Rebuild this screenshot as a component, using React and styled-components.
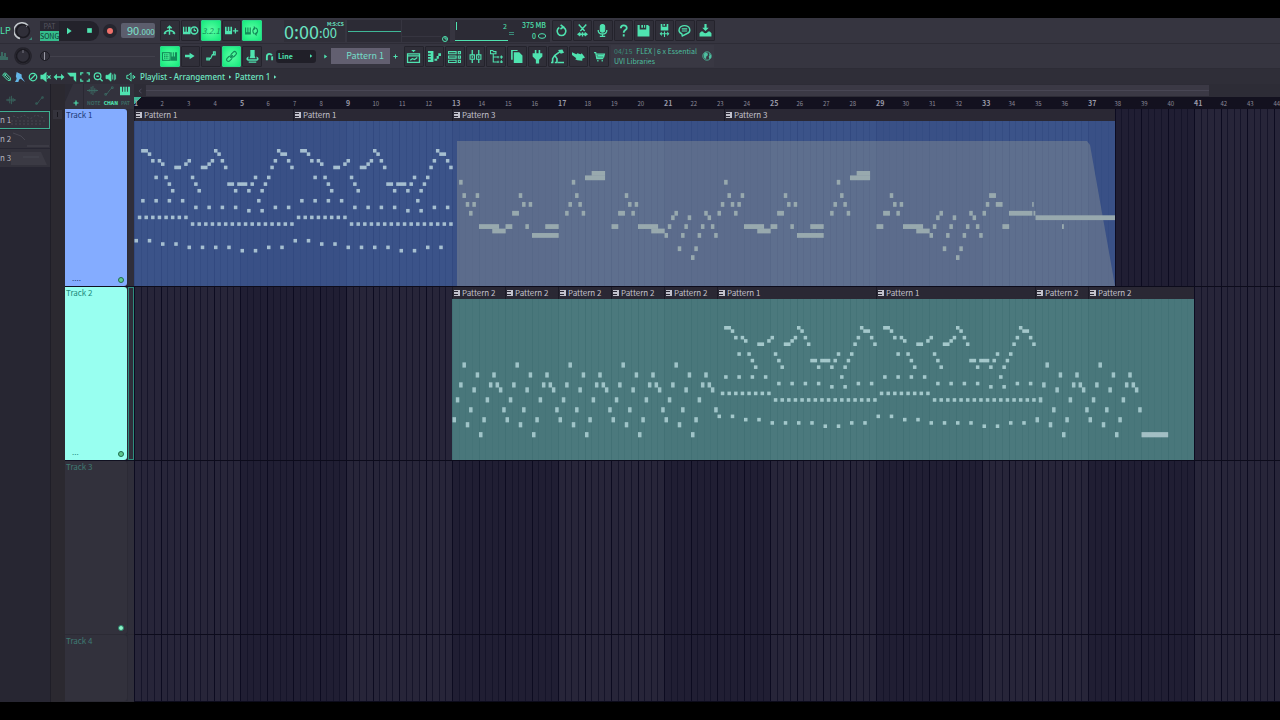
import React, { useState } from "react";
import styled, { createGlobalStyle, css } from "styled-components";

const theme = {
  accent: "#4fe3b0",
  accentDim: "#3a8a78",
  text: "#c2c2cc",
};

const BAR = 53 / 2;
const STEP = BAR / 8;

const barsToPx = (bars) => Math.round(bars * BAR);

const GlobalStyle = createGlobalStyle`
  * {
    box-sizing: border-box;
  }

  body {
    margin: 0;
    background: #000000;
    font-family: "Noto Sans CJK SC", "Noto Sans", sans-serif;
    color: ${theme.accent};
  }

  button, select, input {
    font: inherit;
    color: inherit;
  }
`;

const Screen = styled.div`
  height: 100vh;
  padding: 18px 0;
  display: flex;
  flex-direction: column;
  overflow: hidden;
`;

const Toolbar = styled.header`
  background: #363540;
  display: flex;
  flex-direction: column;
`;

const ToolRow = styled.div`
  display: flex;
  align-items: center;
  height: ${({ $height }) => $height}px;
  border-bottom: 1px solid #2d2c36;
  overflow: hidden;
`;

const Group = styled.div`
  display: flex;
  align-items: center;
  flex: none;
  width: ${({ $width }) => $width}px;
  height: 100%;
  padding: ${({ $pad }) => $pad || "0"};
  gap: ${({ $gap }) => $gap || 0}px;
`;

const ButtonStrip = styled.div`
  display: flex;
  flex: none;
  gap: 1px;
  height: 21px;
  width: ${({ $width }) => $width}px;
`;

const ToolButton = styled.button`
  flex: 1;
  min-width: 0;
  padding: 0;
  display: flex;
  align-items: center;
  justify-content: center;
  border: 1px solid ${({ $on }) => ($on ? "#2bd98a" : "#24232c")};
  border-radius: 1px;
  background: ${({ $on }) =>
    $on ? "radial-gradient(#5cffa4, #14ea7c)" : "#302f39"};
  color: ${({ $on }) => ($on ? "#128a58" : theme.accent)};
`;

const PlainButton = styled.button`
  padding: 0;
  border: 0;
  background: none;
  display: flex;
  align-items: center;
  justify-content: center;
  width: ${({ $width }) => $width || 13}px;
  height: 13px;
  color: ${({ $color }) => $color || theme.accent};
`;

const MenuEnd = styled.span`
  width: 8px;
  font-size: 9px;
  line-height: 12px;
  white-space: nowrap;
`;

const Transport = styled.div`
  display: flex;
  align-items: center;
  height: 20px;
  border-radius: 0 9px 9px 0;
  background: #23222b;
`;

const ModeSwitch = styled.div`
  display: flex;
  flex-direction: column;
  width: 19px;
`;

const ModeButton = styled.button`
  height: 10px;
  padding: 0;
  border: 0;
  font-size: 7px;
  line-height: 10px;
  background: ${({ $on }) => ($on ? "#35bd8d" : "#292832")};
  color: ${({ $on }) => ($on ? "#12352e" : "#55545f")};
`;

const Tempo = styled.output`
  width: 34px;
  height: 15px;
  border-radius: 2px;
  background: #5c5e6d;
  color: #7be0cc;
  font-size: 11px;
  line-height: 15px;
  padding-left: 6px;

  small {
    font-size: 8px;
  }
`;

const Clock = styled.div`
  display: flex;
  width: 61px;
  height: 22px;
  background: #302f39;
  color: #6ae3c2;
  font-size: 18px;
  line-height: 22px;
  white-space: nowrap;
`;

const ClockTail = styled.div`
  display: flex;
  flex-direction: column;
  font-size: 13px;
  line-height: 12px;
`;

const ClockUnit = styled.span`
  padding-left: 8px;
  font-size: 5px;
  line-height: 7px;
  font-weight: 700;
`;

const Panel = styled.div`
  display: flex;
  width: ${({ $width }) => $width}px;
  height: 22px;
  background: #2c2b35;
`;

const Stats = styled.div`
  flex: 1;
  padding-right: 4px;
  font-size: 7px;
  line-height: 11px;
  font-weight: 500;
  white-space: nowrap;
`;

const StatLine = styled.div`
  display: flex;
  align-items: center;
  justify-content: flex-end;
  gap: 2px;
  height: 11px;
`;

const SnapBox = styled.label`
  display: flex;
  align-items: center;
  width: 40px;
  height: 13px;
  padding-right: 3px;
  border-radius: 3px;
  background: #201f28;
`;

const SnapSelect = styled.select`
  appearance: none;
  flex: 1;
  min-width: 0;
  height: 13px;
  padding: 0 2px;
  border: 0;
  background: none;
  font-size: 7px;
  line-height: 13px;
  font-weight: 700;
`;

const PatternSelect = styled.select`
  appearance: none;
  width: 59px;
  height: 16px;
  padding: 0 6px 0 0;
  border: 0;
  background: #625f70;
  color: #74dcc8;
  font-size: 9px;
  line-height: 16px;
  text-align: right;
  text-align-last: right;
`;

const News = styled.div`
  display: flex;
  align-items: center;
  justify-content: space-between;
  width: 103px;
  height: 22px;
  padding: 0 2px 0 3px;
  background: #393843;
  font-size: 7px;
  line-height: 10px;
  color: #4dbf9f;
  white-space: nowrap;

  p {
    margin: 0;
  }

  span {
    color: ${theme.accentDim};
    margin-right: 4px;
  }
`;

const SliderTrack = styled.input`
  appearance: none;
  flex: 1;
  min-width: 0;
  height: 12px;
  margin: 0;
  background: linear-gradient(#42414c, #42414c) center / 100% 1px no-repeat;

  &::-webkit-slider-thumb {
    appearance: none;
    width: 10px;
    height: 10px;
    border-radius: 50%;
    border: 1px solid #1d1c24;
    background: linear-gradient(90deg, #33323c 3px, #9a9aa6 3px 4px, #33323c 4px);
  }
`;

const TitleBar = styled.div`
  display: flex;
  align-items: center;
  height: 15px;
  background: #2f2e38;
`;

const Crumbs = styled.h1`
  display: flex;
  align-items: center;
  gap: 3px;
  margin: 0;
  font-family: "Noto Sans", sans-serif;
  font-size: 8px;
  line-height: 12px;
  font-weight: 500;
  color: #6fe8c4;
  white-space: nowrap;
`;

const Workspace = styled.main`
  flex: 1;
  min-height: 0;
  display: flex;
  background: #2b2a34;
`;

const Picker = styled.aside`
  flex: none;
  width: 51px;
  display: flex;
  flex-direction: column;
  gap: 1px;
  background: #272632;
  border-right: 1px solid #1f1e27;
`;

const PickerTabs = styled.div`
  display: flex;
  align-items: center;
  justify-content: space-between;
  height: 26px;
  padding: 6px 4px 0;
  background: #2d2c37;
`;

const PickerItem = styled.button`
  display: flex;
  align-items: center;
  justify-content: space-between;
  height: 18px;
  padding: 0;
  border: 1px solid ${({ $on }) => ($on ? "#3fae90" : "transparent")};
  border-left: 0;
  background: #32313b;
  color: #b4b4bf;
  font-size: 8px;
  line-height: 12px;
  white-space: nowrap;
`;

const Gutter = styled.div`
  flex: none;
  width: 14px;
  padding-top: 26px;
  background: #2b2930;
`;

const GutterMark = styled.div`
  width: 9px;
  height: 9px;
  margin-left: 2px;
  background: linear-gradient(#17161d, #17161d) center / 1px 5px no-repeat #34333c;
`;

const Heads = styled.section`
  flex: none;
  width: 69px;
  display: flex;
  flex-direction: column;
`;

const HeadTools = styled.div`
  display: flex;
  flex: none;
  height: 25px;
  background: #33323d;
  clip-path: polygon(8px 0, 100% 0, 100% 100%, 0 100%, 0 18px);
`;

const AddTrack = styled.div`
  display: flex;
  align-items: flex-end;
  width: 19px;
  padding-left: 4px;
  border-right: 1px solid #2a2933;
`;

const HeadToolColumn = styled.div`
  flex: 1;
  display: flex;
  flex-direction: column;
`;

const HeadToolRow = styled.div`
  display: flex;
  align-items: center;
  justify-content: space-between;
  height: 13px;
  padding: 0 4px 0 3px;
  font-size: 5px;
  line-height: 12px;
  font-weight: 700;
  color: #3c6b64;

  strong {
    color: ${theme.accent};
  }
`;

const HeadRow = styled.div`
  display: flex;
  ${({ $height }) => ($height ? css`flex: none; height: ${$height}px;` : css`flex: 1; min-height: 0;`)}
  border-bottom: 1px solid ${({ $tone }) => ($tone ? "#101020" : "#2b2a34")};
  background: #2b2a35;
`;

const TrackHead = styled.div`
  display: flex;
  flex-direction: column;
  justify-content: space-between;
  width: 62px;
  padding: 0 3px 1px 1px;
  border-radius: 0 3px 3px 0;
  background: ${({ $tone }) => $tone || "#32313c"};
  color: ${({ $ink }) => $ink};
  font-size: 8px;
  line-height: 11px;
`;

const HeadFoot = styled.div`
  display: flex;
  align-items: center;
  justify-content: space-between;
  height: 12px;
  padding-left: 6px;
`;

const Dots = styled.span`
  height: 12px;
  font-size: 8px;
  line-height: 10px;
`;

const Lamp = styled.button`
  width: 6px;
  height: 6px;
  padding: 0;
  margin-top: 2px;
  border: 1px solid ${({ $on }) => ($on ? "#2b7f68" : "#206b4c")};
  border-radius: 50%;
  background: ${({ $on }) => ($on ? "#8cf5c8" : "#5cc98f")};
`;

const Meter = styled.div`
  flex: 1;
  margin-left: 1px;
  background: #2f2e3a;
  border: ${({ $active }) => ($active ? "1px solid #2f8d7c" : "0")};
`;

const Timeline = styled.section`
  flex: 1;
  min-width: 0;
  display: flex;
  flex-direction: column;
  overflow: hidden;
`;

const ScrollStrip = styled.div`
  flex: none;
  display: flex;
  align-items: center;
  height: 13px;
  padding-left: 3px;
  gap: 3px;
  background: #2d2c36;
  color: #57566a;
`;

const ScrollThumb = styled.div`
  width: 93%;
  height: 11px;
  background: linear-gradient(#484654, #484654) center / 100% 1px no-repeat #3b3945;
`;

const Ruler = styled.ol`
  flex: none;
  display: flex;
  height: 12px;
  margin: 0;
  padding: 0;
  list-style: none;
  background: #13111f;
`;

const RulerPair = styled.li`
  flex: none;
  display: flex;
  width: 53px;
`;

const RulerMark = styled.span`
  flex: 1;
  color: ${({ $strong }) => ($strong ? "#9a9aa8" : "#8a8997")};
  font-size: ${({ $strong }) => ($strong ? 7 : 6)}px;
  font-weight: ${({ $strong }) => ($strong ? 700 : 400)};
  line-height: 13px;
  background: ${({ $first }) =>
    $first ? "linear-gradient(135deg, #3fb797 5px, transparent 5px)" : "none"};
`;

const Lanes = styled.div`
  flex: 1;
  min-height: 0;
  display: flex;
  flex-direction: column;
  background:
    repeating-linear-gradient(
      90deg,
      #0c0b20 0 1px, transparent 1px 7px,
      #151429 7px 8px, transparent 8px 13px,
      #151429 13px 14px, transparent 14px 20px,
      #151429 20px 21px, transparent 21px 27px,
      #0c0b20 27px 28px, transparent 28px 33px,
      #151429 33px 34px, transparent 34px 40px,
      #151429 40px 41px, transparent 41px 46px,
      #151429 46px 47px, transparent 47px 53px
    ),
    repeating-linear-gradient(90deg, #272539 0 106px, #201e33 106px 212px);
`;

const Lane = styled.div`
  display: flex;
  ${({ $height }) => ($height ? css`flex: none; height: ${$height}px;` : css`flex: 1;`)}
  flex-direction: column;
  border-bottom: 1px solid #0c0b1b;
  padding-left: ${({ $start }) => barsToPx($start || 0)}px;
`;

const ClipTitles = styled.div`
  display: flex;
  height: 12px;
`;

const ClipTitle = styled.div`
  flex: none;
  display: flex;
  align-items: center;
  gap: 2px;
  width: ${({ $bars }) => barsToPx($bars)}px;
  padding-left: 1px;
  border-left: 1px solid #1b1a26;
  background: #2a2834;
  color: ${theme.text};
  font-size: 8px;
  line-height: 12px;
  white-space: nowrap;
`;

const ClipBody = styled.svg`
  display: block;
  flex: none;
  background: ${({ $fill }) => $fill};
`;

const Svg = styled.svg`
  display: block;
  flex: none;
  fill: none;
  stroke: currentColor;
`;

const ChartLabel = styled.text`
  font-size: 7px;
  fill: ${theme.accent};
  stroke: none;
`;

const Count = styled.span`
  font-size: 8px;
  line-height: 12px;
  font-style: italic;
`;

const shapes = {
  metronome: <path d="M1 9C3 5 9 5 11 9M6 10V2M4 4l2-2 2 2M1 9l2-1M11 9l-2-1" strokeWidth="1.3" />,
  keysClock: (
    <>
      <path d="M0 3h1v4h1V3h1v4h1V3h2v6H0z" fill="currentColor" stroke="none" />
      <circle cx="9" cy="6" r="2.8" strokeWidth="1.2" />
      <path d="M9 4.4V6h1.4" strokeWidth="1" />
    </>
  ),
  keysPlus: <path d="M0 2.500h1.500v4h1v-4h1.500v4h1v-4h1.500V9.500H0zM9 4h1.200v1.700h2v1.200h-2v1.800H9V6.900H7.200V5.700H9z" fill="currentColor" stroke="none" />,
  keysLoop: (
    <>
      <path d="M0 3h1v4h1V3h1v4h1V3h1v6H0z" fill="currentColor" stroke="none" />
      <path d="M8 8.500C6 7 6.500 4 8.500 3.500M7.500 2.200l1.200 1.300-1.200 1.300M9.500 3.500c2 1.500 1.500 4.500-.5 5M10 7.200L8.800 8.500 10 9.800" />
    </>
  ),
  keyboard: (
    <>
      <rect x="-.5" y="2.500" width="7" height="7" />
      <path d="M1 4.500h4M1 6h4M1 7.500h4" strokeDasharray="1 .5" />
      <path d="M7 2h1v4h1V2h1v4h1V2h2v8H7z" fill="currentColor" stroke="none" />
    </>
  ),
  arrow: <path d="M0 4.500h5.500V2l6 4-6 4V7.500H0z" fill="currentColor" stroke="none" />,
  slide: <path d="M1 8.500h3v2H1zM9 1h2v3.500H9zM4 9.500c4-.5 1.500-5 5-6" strokeWidth="1.500" />,
  link: (
    <g transform="rotate(-45 6 6)">
      <rect x="-.8" y="4" width="6.800" height="4" rx="2" strokeWidth="1.200" />
      <rect x="6" y="4" width="6.800" height="4" rx="2" strokeWidth="1.200" />
      <path d="M4 6h4" strokeWidth="1.200" />
    </g>
  ),
  hat: <path d="M4 0h4v5.500l.8 2H3.200l.8-2zM2.500 6C-.5 7 0 9.500 2 10h8c2-.5 2.500-3-.5-4l.5 2.500H2zM2.500 10.600h7v1.200h-7z" fill="currentColor" stroke="none" />,
  refresh: <path d="M4 3.200a4 4 0 1 0 4 0M5.200.8l2.600 2-2.800 1.800" strokeWidth="1.500" />,
  cut: <path d="M2.500 .5l5.500 6M9.500 .5L4 6.500M2 9.500h8M4 8L2 9.500 4 11M8 8l2 1.500L8 11M6 7.500v4" strokeWidth="1.300" />,
  mic: (
    <>
      <rect x="4" y=".5" width="4" height="7" rx="2" fill="currentColor" />
      <path d="M2 5.500c0 5 8 5 8 0M6 9v2M3.500 11.500h5" strokeWidth="1.200" />
    </>
  ),
  help: <path d="M3.500 4c0-3.500 5.500-3.500 5.500-.3C9 5.800 6.200 5.500 6.200 8M6.200 9.500v2" strokeWidth="1.700" />,
  save: <path d="M.5 1H2.500v4h6V1H10l1.500 1v9.500H.5zM4 1h1.500v2.500H4zM6.500 1h1v2.500h-1z" fill="currentColor" stroke="none" />,
  saveAs: <path d="M2.500 0H4v2.500h4V0h1.500v6h-7zM5 0h1.500v1.500H5zM1.500 9l2-2v1.500h2V7h1v1.500h2V7l2 2-2 2V9.500h-2V12h-1V9.500h-2V11z" fill="currentColor" stroke="none" />,
  comment: (
    <>
      <path d="M3.500 9C-1 7 1 1.500 6 1.500S13 7 8 9L4 11z" strokeWidth="1.300" />
      <path d="M3.500 4.500h5M3.500 6.500h5" />
    </>
  ),
  download: (
    <>
      <path d="M5 0h2v3.500h2L6 6.500 3 3.500h2z" fill="currentColor" stroke="none" />
      <path d="M2 7L.5 8.500v3h11v-3L10 7H8.200c-.5 2-4 2-4.400 0z" fill="currentColor" stroke="none" />
    </>
  ),
  playlist: (
    <>
      <path d="M.5 3.500h11v8H.5zM.5 5.500h11M3 9.500l2-1.500 2 .8L9.500 7" strokeWidth="1.200" />
      <path d="M4 0h4L6 2z" fill="currentColor" stroke="none" />
    </>
  ),
  pianoRoll: <path d="M0 1h5v10H0V9h2.500V8H0V6.500h2.500V5.500H0V4h2.500V3H0zM6 8h2.500v2H6zM8 5.500h2v2.500H8zM9.500 3H12v2.500H9.500z" fill="currentColor" stroke="none" />,
  rack: <path d="M.5 1.500h7v2h-7zM.5 5.500h7v2h-7zM.5 9.500h7v2h-7zM9.500 1.500h2v2h-2zM9.500 5.500h2v2h-2zM9.500 9.500h2v2h-2z" />,
  mixer: (
    <>
      <path d="M3 0v12M9 0v12" strokeWidth="1.200" />
      <path d="M1 4.500h4v4H1zM7 4.500h4v4H7zM3 5.500v2M9 5.500v2" fill="#302f39" />
    </>
  ),
  tree: <path d="M.5.500h2l1 1h2v2h-5zM3 4v7h4M3 6.500h4M7.500 5.500v2M7.500 10v2M9 6.500h3M9 11h3M10.500 5v3M10.500 9.500V12" />,
  files: <path d="M1 0h6v1H2.500v8H1zM3.500 2H8.500l3 3V12h-8z" fill="currentColor" stroke="none" />,
  plug: <path d="M3.500 0H5v3h2V0h1.500v3H10.500v3L7.500 9v3.500h-3V9L1.500 6V3h2z" fill="currentColor" stroke="none" />,
  worker: (
    <>
      <path d="M9 1L3.500 5l2 3v3.500H3.500M3.500 5L1.500 8v3.500H0M6.500 11.500H12" strokeWidth="1.500" />
      <path d="M6.500 0l4-.5 1.500 3-3 1z" fill="currentColor" stroke="none" />
    </>
  ),
  hand: <path d="M0 2l4 2 1-1 3 1 1-1 3 4-2.500 1v2L5 9.500 3 8.500l1-1-4-3z" fill="currentColor" stroke="none" />,
  cart: <path d="M1 2.500h1.500l1 5.500h6M3 3.800h7.500L9.800 6.500H3.500M4 5.200h6M4.500 9.200v1.500M8.500 9.200v1.500" strokeWidth="1.100" />,
  globe: (
    <>
      <circle cx="6" cy="6" r="5" />
      <path d="M2 4l2-2.500 3 1.500 0 2-2 2v3L2.500 8zM8 2l3 3v3L9 10 8 7l1-2z" fill="currentColor" stroke="none" />
    </>
  ),
  magnet: <path d="M2.500 11V6a3.500 3.500 0 0 1 7 0v5" strokeWidth="2.500" strokeDasharray="14 1.500" />,
  pencil: <path d="M2 2l2-1 6 6v3H7L1 4zM3 3l6 6M5 2L3 5" strokeWidth="1.200" />,
  brush: <path d="M2 0l6 3 0 3 4 6-5-4-2 1-1 3H0l2-4-1-3z" fill="#63b5e6" stroke="none" />,
  ban: (
    <>
      <circle cx="6" cy="6" r="4.500" strokeWidth="1.500" />
      <path d="M3 9l6-6" strokeWidth="1.500" />
    </>
  ),
  mute: <path d="M0 4h2.500L6 1v10L2.500 8H0zM7.500 4l4 4M11.500 4l-4 4" fill="currentColor" strokeWidth="1.300" />,
  resize: <path d="M-.5 6l4-4v3h5V2l4 4-4 4V7h-5v3z" fill="currentColor" stroke="none" />,
  slice: <path d="M0 1h11v11L8 9V5.500H4z" fill="currentColor" stroke="none" />,
  select: <path d="M1 4V1h3M8 1h3v3M11 8v3H8M4 11H1V8" strokeWidth="1.600" />,
  zoom: (
    <>
      <circle cx="5.500" cy="5" r="4" strokeWidth="1.500" />
      <path d="M8.500 8l3 3M4 5h3" strokeWidth="1.700" />
    </>
  ),
  speaker: <path d="M0 4h2.500L6 1v10L2.500 8H0zM8 3v6M10 2v8M11.500 3v6" fill="currentColor" />,
  sound: <path d="M1 4h2l3-3v10L3 8H1zM8.500 4v4L11 6z" strokeWidth="1.200" />,
  wave: <path d="M0 6h12M2.500 4.500v3M4.500 2v8M6.500 1v10M8.500 3.500v5M10 5v2" />,
  curve: <path d="M2 10c3 0 2-2 4-4s2-3 4-4M1 9h2v2H1zM9 1h2v2H9z" />,
  keys: <path d="M0 1h2.500v6h1V1h2v6h1V1h2v6h1V1H12v10H0z" fill="currentColor" stroke="none" />,
  plus: <path d="M6 1v10M1 6h10" strokeWidth="2.400" />,
  play: <path d="M3 1l7 5-7 5z" fill="currentColor" stroke="none" />,
  stop: <path d="M2 2h8v8H2z" fill="currentColor" stroke="none" />,
  piano: <path d="M1 10V6h2V2h2v4h1V3h2v4h2v3z" fill="currentColor" stroke="none" />,
  back: <path d="M9 2L4 6l5 4" strokeWidth="1.500" />,
  ring: <ellipse cx="6" cy="6" rx="5.500" ry="3.500" strokeWidth="1.500" />,
  clip: (
    <>
      <path d="M0 0h12v12H0z" fill="currentColor" stroke="none" />
      <path d="M0 3h8M0 9h8" stroke="#2a2834" strokeWidth="2" />
    </>
  ),
};

const Icon = ({ name, size = 12 }) => (
  <Svg width={size} height={size} viewBox="0 0 12 12" aria-hidden="true" overflow="visible">
    {shapes[name]}
  </Svg>
);

const Knob = ({ lit }) => (
  <Svg width="18" height="18" viewBox="0 0 18 18" aria-hidden="true">
    <circle cx="9" cy="9" r="6.500" fill="#302f39" stroke="#1b1a21" strokeWidth="1.500" />
    <path
      d={lit ? "M14 3.500A8 8 0 1 0 6 16.500" : "M9 1a8 8 0 1 0 .1 0"}
      stroke={lit ? "#c3c8cc" : "#24232b"}
      strokeWidth="1.500"
    />
    <path d={lit ? "M12 5l2-2" : "M9 3v3"} stroke="#777683" />
    {lit && <path d="M18 15v3h-3z" fill={theme.accentDim} stroke="none" />}
  </Svg>
);

const everyOther = (from, to, row) => {
  const out = [];
  for (let i = from; i <= to; i += 2) out.push([i, row]);
  return out;
};

const atRow = (row, steps) => steps.map((s) => [s, row]);

// each note is [step, row, length]
const melody = [
  [2, 0, 2], [24, 0], [43, 0],
  [4, 1], [25, 1], [44, 1, 2],
  ...atRow(3, [5, 7, 16, 23, 26, 42, 46]),
  ...atRow(4, [8, 15, 22]),
  [12, 5, 2], [20, 5, 2], [27, 5], [41, 5], [47, 5],
  ...atRow(8, [6, 9, 17, 36, 40]),
  [10, 10], [18, 10], [28, 10, 2], [31, 10, 3], [35, 10], [39, 10],
  ...atRow(12, [11, 19, 30, 34, 38]),
  ...atRow(15, [2, 6, 10, 14, 37]),
  ...atRow(17, [18, 22, 26, 30, 42, 46]),
  ...atRow(18, [34, 38]),
  ...everyOther(1, 15, 20),
  ...everyOther(17, 47, 22),
  ...atRow(27, [0, 4]),
  ...atRow(28, [8, 12]),
  ...atRow(29, [16, 20, 24, 28, 40, 44]),
  ...atRow(30, [32, 36]),
];

const arpeggio = [11, 7, 4, 0, 12, 9, 5, 2, 14, 11, 7, 4, 2, 4, 5, 9].map(
  (row, step) => [step, row]
);

const leadOpening = [
  [2, 2], [3, 5], [4, 7], [5, 9], [6, 7], [7, 5],
  [8, 12, 6], [12, 13, 4], [16, 12, 2], [18, 9, 2],
  [20, 5], [21, 7], [22, 12], [23, 7], [24, 14, 8], [28, 12, 4],
  [34, 9], [35, 7], [36, 2], [37, 5], [38, 7], [39, 9],
  [40, 1, 6], [42, 0, 4],
  [48, 12, 2], [50, 9, 2], [52, 5], [53, 7], [54, 9], [55, 7],
  [56, 12, 6], [60, 13, 4],
  ...[14, 12, 10, 9, 17, 14, 12, 10, 19, 17, 14, 12, 9, 10, 12, 14].map(
    (row, i) => [64 + i, row]
  ),
];

const shift = (notes, by) => notes.map(([s, r, l]) => [s + by, r, l]);

const lead = [
  ...leadOpening,
  [80, 9], [81, 7],
  ...shift(leadOpening, 80),
  [160, 9], [161, 7], [162, 5, 2], [164, 7, 2], [166, 12, 2], [168, 9, 7],
  [175, 7, 0.4], [175.4, 9, 0.5], [176, 10, 24], [184, 12, 0.5],
];

const tracks = [
  {
    name: "Track 1",
    height: 178,
    tone: "#84acff",
    ink: "#1d3a78",
    dots: "....",
    fill: "rgba(70, 108, 180, 0.65)",
    bodyHeight: 165,
    clips: [["Pattern 1", 6], ["Pattern 1", 6], ["Pattern 3", 10.25], ["Pattern 3", 14.75]],
    parts: [
      { notes: melody, at: [0, 48], top: 28, pitch: 3.33, size: 3.6, color: "#a6bfd0" },
      { notes: lead, at: [96], top: 50, pitch: 4.43, size: 4.8, color: "#98a9ae" },
    ],
    fade: "M323 20H953L956 24L981 165H323z",
  },
  {
    name: "Track 2",
    height: 174,
    tone: "#98fff0",
    ink: "#1f8a7c",
    dots: "...",
    start: 12,
    active: true,
    fill: "rgba(93, 162, 157, 0.68)",
    bodyHeight: 161,
    clips: [
      ["Pattern 2", 2], ["Pattern 2", 2], ["Pattern 2", 2], ["Pattern 2", 2], ["Pattern 2", 2],
      ["Pattern 1", 6], ["Pattern 1", 6], ["Pattern 2", 2], ["Pattern 2", 4],
    ],
    parts: [
      { notes: arpeggio, at: [0, 16, 32, 48, 64, 176, 192], top: 63.4, pitch: 4.98, size: 5.2, color: "#a0c4c8" },
      { notes: melody, at: [80, 128], top: 27, pitch: 3.28, size: 3.6, color: "#a4c8cb" },
      { notes: [[16, 14, 8]], at: [192], top: 63.4, pitch: 4.98, size: 5.2, color: "#a3bfc4" },
    ],
  },
  { name: "Track 3", height: 174, ink: "#3f7a72", lamp: true },
  { name: "Track 4", ink: "#3f7a72" },
];

const previews = [
  { line: "M2 4l6 2 5-3 6 4 6-4 8 3M0 9h34M0 12h30", dash: "2 2" },
  { line: "M2 2l8 3 4 4M16 15h22" },
  { shade: "M0 2h30l6 13H0z", line: "M12 7h16" },
];

function Clips({ track }) {
  const bars = track.clips.reduce((sum, [, length]) => sum + length, 0);
  return (
    <>
      <ClipTitles>
        {track.clips.map(([title, length], i) => (
          <ClipTitle key={i} $bars={length}>
            <Icon name="clip" size={6} />
            {title}
          </ClipTitle>
        ))}
      </ClipTitles>
      <ClipBody $fill={track.fill} width={barsToPx(bars)} height={track.bodyHeight}>
        {track.fade && <path d={track.fade} fill="#aeaf9b" fillOpacity="0.3" />}
        {track.parts.map((part, p) =>
          part.at.map((at) => (
            <g key={`${p}-${at}`} fill={part.color}>
              {part.notes.map(([step, row, length = 1], i) => (
                <rect
                  key={i}
                  x={(at + step) * STEP + 0.5}
                  y={part.top + row * part.pitch}
                  width={length * STEP + 0.2}
                  height={part.size}
                />
              ))}
            </g>
          ))
        )}
      </ClipBody>
    </>
  );
}

const editTools = ["pencil", "brush", "ban", "mute", "resize", "slice", "select", "zoom", "speaker"];
const fileTools = ["refresh", "cut", "mic", "help", "save", "saveAs", "comment", "download"];
const windowTools = ["playlist", "pianoRoll", "rack", "mixer", "tree", "files", "plug", "worker", "hand", "cart"];

function App() {
  const [mode, setMode] = useState("SONG");
  const [picked, setPicked] = useState(1);

  return (
    <>
      <GlobalStyle />
      <Screen>
        <Toolbar>
          <ToolRow $height={26}>
            <Group $width={40} $gap={6}>
              <MenuEnd>LP</MenuEnd>
              <Knob lit />
            </Group>
            <Group $width={81}>
              <Transport>
                <ModeSwitch>
                  {["PAT", "SONG"].map((m) => (
                    <ModeButton key={m} $on={mode === m} onClick={() => setMode(m)}>
                      {m}
                    </ModeButton>
                  ))}
                </ModeSwitch>
                <PlainButton $width={20} aria-label="Play"><Icon name="play" size={8} /></PlainButton>
                <PlainButton $width={20} aria-label="Stop"><Icon name="stop" size={7} /></PlainButton>
              </Transport>
              <PlainButton $width={22} $color="#f0706a" aria-label="Record">
                <Svg width="16" height="16" viewBox="0 0 16 16">
                  <circle cx="8" cy="8" r="7" fill="#26252e" stroke="none" />
                  <circle cx="8" cy="8" r="3" fill="currentColor" stroke="none" />
                </Svg>
              </PlainButton>
            </Group>
            <Group $width={39}>
              <Tempo>90<small>.000</small></Tempo>
            </Group>
            <ButtonStrip $width={102}>
              <ToolButton aria-label="Metronome"><Icon name="metronome" size={13} /></ToolButton>
              <ToolButton aria-label="Wait for input"><Icon name="keysClock" size={15} /></ToolButton>
              <ToolButton $on aria-label="Countdown"><Count>3.2.1</Count></ToolButton>
              <ToolButton aria-label="Overdub"><Icon name="keysPlus" size={13} /></ToolButton>
              <ToolButton $on aria-label="Loop record"><Icon name="keysLoop" size={14} /></ToolButton>
            </ButtonStrip>
            <Group $width={85} $pad="0 0 0 22px">
              <Clock>
                0:00
                <ClockTail>
                  <ClockUnit>M:S:CS</ClockUnit>
                  :00
                </ClockTail>
              </Clock>
            </Group>
            <Panel $width={103}>
              <Svg width="103" height="22" viewBox="0 0 103 22">
                <path d="M1 11.500H54" stroke="#3fb797" />
                <path d="M54.500 0v22M54 16.500h40" stroke="#363540" />
                <circle cx="98" cy="19" r="2.500" stroke="#4fe3b0" />
                <path d="M98 17v2h2" stroke="#4fe3b0" />
              </Svg>
            </Panel>
            <Group $width={102} $pad="0 0 0 5px">
              <Panel $width={95}>
                <Svg width="60" height="22" viewBox="0 0 60 22">
                  <path d="M1.500 2v8M0 20.500h53" stroke="#4fe3b0" />
                  <path d="M54 12.500h5M54 14.500h5" stroke="#3a8a78" />
                  <ChartLabel x="48" y="9">2</ChartLabel>
                </Svg>
                <Stats>
                  <StatLine>375 MB</StatLine>
                  <StatLine>0 <Icon name="ring" size={8} /></StatLine>
                </Stats>
              </Panel>
            </Group>
            <ButtonStrip $width={163}>
              {fileTools.map((name) => (
                <ToolButton key={name} aria-label={name}><Icon name={name} size={13} /></ToolButton>
              ))}
            </ButtonStrip>
          </ToolRow>
          <ToolRow $height={25}>
            <Group $width={40} $gap={6}>
              <PlainButton $width={8} $color="#3a6a62" aria-label="Pitch"><Icon name="piano" /></PlainButton>
              <Knob />
            </Group>
            <Group $width={120} $pad="0 5px 0 0">
              <SliderTrack type="range" min="0" max="100" defaultValue="0" aria-label="Song position" />
            </Group>
            <ButtonStrip $width={102}>
              <ToolButton $on aria-label="Typing keyboard"><Icon name="keyboard" size={13} /></ToolButton>
              <ToolButton aria-label="Follow"><Icon name="arrow" size={10} /></ToolButton>
              <ToolButton aria-label="Slide"><Icon name="slide" size={10} /></ToolButton>
              <ToolButton $on aria-label="Link"><Icon name="link" size={11} /></ToolButton>
              <ToolButton aria-label="Stamp"><Icon name="hat" size={13} /></ToolButton>
            </ButtonStrip>
            <Group $width={58} $gap={2} $pad="0 0 0 3px">
              <Icon name="magnet" size={9} />
              <SnapBox>
                <SnapSelect aria-label="Snap"><option>Line</option></SnapSelect>
                <Icon name="play" size={4} />
              </SnapBox>
            </Group>
            <Group $width={84}>
              <PlainButton $width={11} aria-label="Previous pattern"><Icon name="play" size={5} /></PlainButton>
              <PatternSelect aria-label="Pattern"><option>Pattern 1</option></PatternSelect>
              <PlainButton $width={10} aria-label="Add pattern"><Icon name="plus" size={5} /></PlainButton>
            </Group>
            <ButtonStrip $width={205}>
              {windowTools.map((name) => (
                <ToolButton key={name} aria-label={name}><Icon name={name} size={13} /></ToolButton>
              ))}
            </ButtonStrip>
            <Group $width={106} $pad="0 0 0 2px">
              <News>
                <p><span>04/15</span>FLEX | 6 x Essential<br />UVI Libraries</p>
                <Icon name="globe" size={10} />
              </News>
            </Group>
          </ToolRow>
        </Toolbar>
        <TitleBar>
          {editTools.map((name) => (
            <PlainButton key={name} aria-label={name}><Icon name={name} size={10} /></PlainButton>
          ))}
          <Group $width={23} $pad="0 0 0 9px"><Icon name="sound" size={10} /></Group>
          <Crumbs>
            Playlist - Arrangement <Icon name="play" size={4} /> Pattern 1 <Icon name="play" size={4} />
          </Crumbs>
        </TitleBar>
        <Workspace>
          <Picker>
            <PickerTabs>
              <PlainButton $color="#3a6a62" aria-label="Audio"><Icon name="wave" size={10} /></PlainButton>
              <PlainButton $color="#3a6a62" aria-label="Automation"><Icon name="curve" size={9} /></PlainButton>
            </PickerTabs>
            {previews.map(({ line, dash, shade }, i) => (
              <PickerItem key={line} $on={picked === i + 1} onClick={() => setPicked(i + 1)}>
                n {i + 1}
                <Svg width="38" height="16" viewBox="0 0 38 16" aria-hidden="true">
                  {shade && <path d={shade} fill="#3b3a44" stroke="none" />}
                  <path d={line} stroke="#474651" strokeDasharray={dash} />
                </Svg>
              </PickerItem>
            ))}
          </Picker>
          <Gutter><GutterMark /></Gutter>
          <Heads>
            <HeadTools>
              <AddTrack>
                <PlainButton aria-label="Add track"><Icon name="plus" size={6} /></PlainButton>
              </AddTrack>
              <HeadToolColumn>
                <HeadToolRow>
                  <Icon name="wave" size={11} />
                  <Icon name="curve" size={10} />
                  <PlainButton $width={10} aria-label="Notes"><Icon name="keys" size={10} /></PlainButton>
                </HeadToolRow>
                <HeadToolRow>
                  <span>NOTE</span><strong>CHAN</strong><span>PAT</span>
                </HeadToolRow>
              </HeadToolColumn>
            </HeadTools>
            {tracks.map((track) => (
              <HeadRow key={track.name} $height={track.height} $tone={track.tone}>
                <TrackHead $tone={track.tone} $ink={track.ink}>
                  {track.name}
                  {track.height && (
                    <HeadFoot>
                      <Dots>{track.dots}</Dots>
                      <Lamp $on={track.lamp} aria-label={`Mute ${track.name}`} />
                    </HeadFoot>
                  )}
                </TrackHead>
                <Meter $active={track.active} />
              </HeadRow>
            ))}
          </Heads>
          <Timeline>
            <ScrollStrip>
              <Icon name="back" size={6} />
              <ScrollThumb />
            </ScrollStrip>
            <Ruler>
              {Array.from({ length: 22 }, (_, i) => i * 2 + 1).map((bar) => (
                <RulerPair key={bar}>
                  <RulerMark $strong={bar % 4 === 1} $first={bar === 1}>{bar}</RulerMark>
                  <RulerMark>{bar + 1}</RulerMark>
                </RulerPair>
              ))}
            </Ruler>
            <Lanes>
              {tracks.map((track) => (
                <Lane key={track.name} $height={track.height} $start={track.start}>
                  {track.clips && <Clips track={track} />}
                </Lane>
              ))}
            </Lanes>
          </Timeline>
        </Workspace>
      </Screen>
    </>
  );
}

export default App;
